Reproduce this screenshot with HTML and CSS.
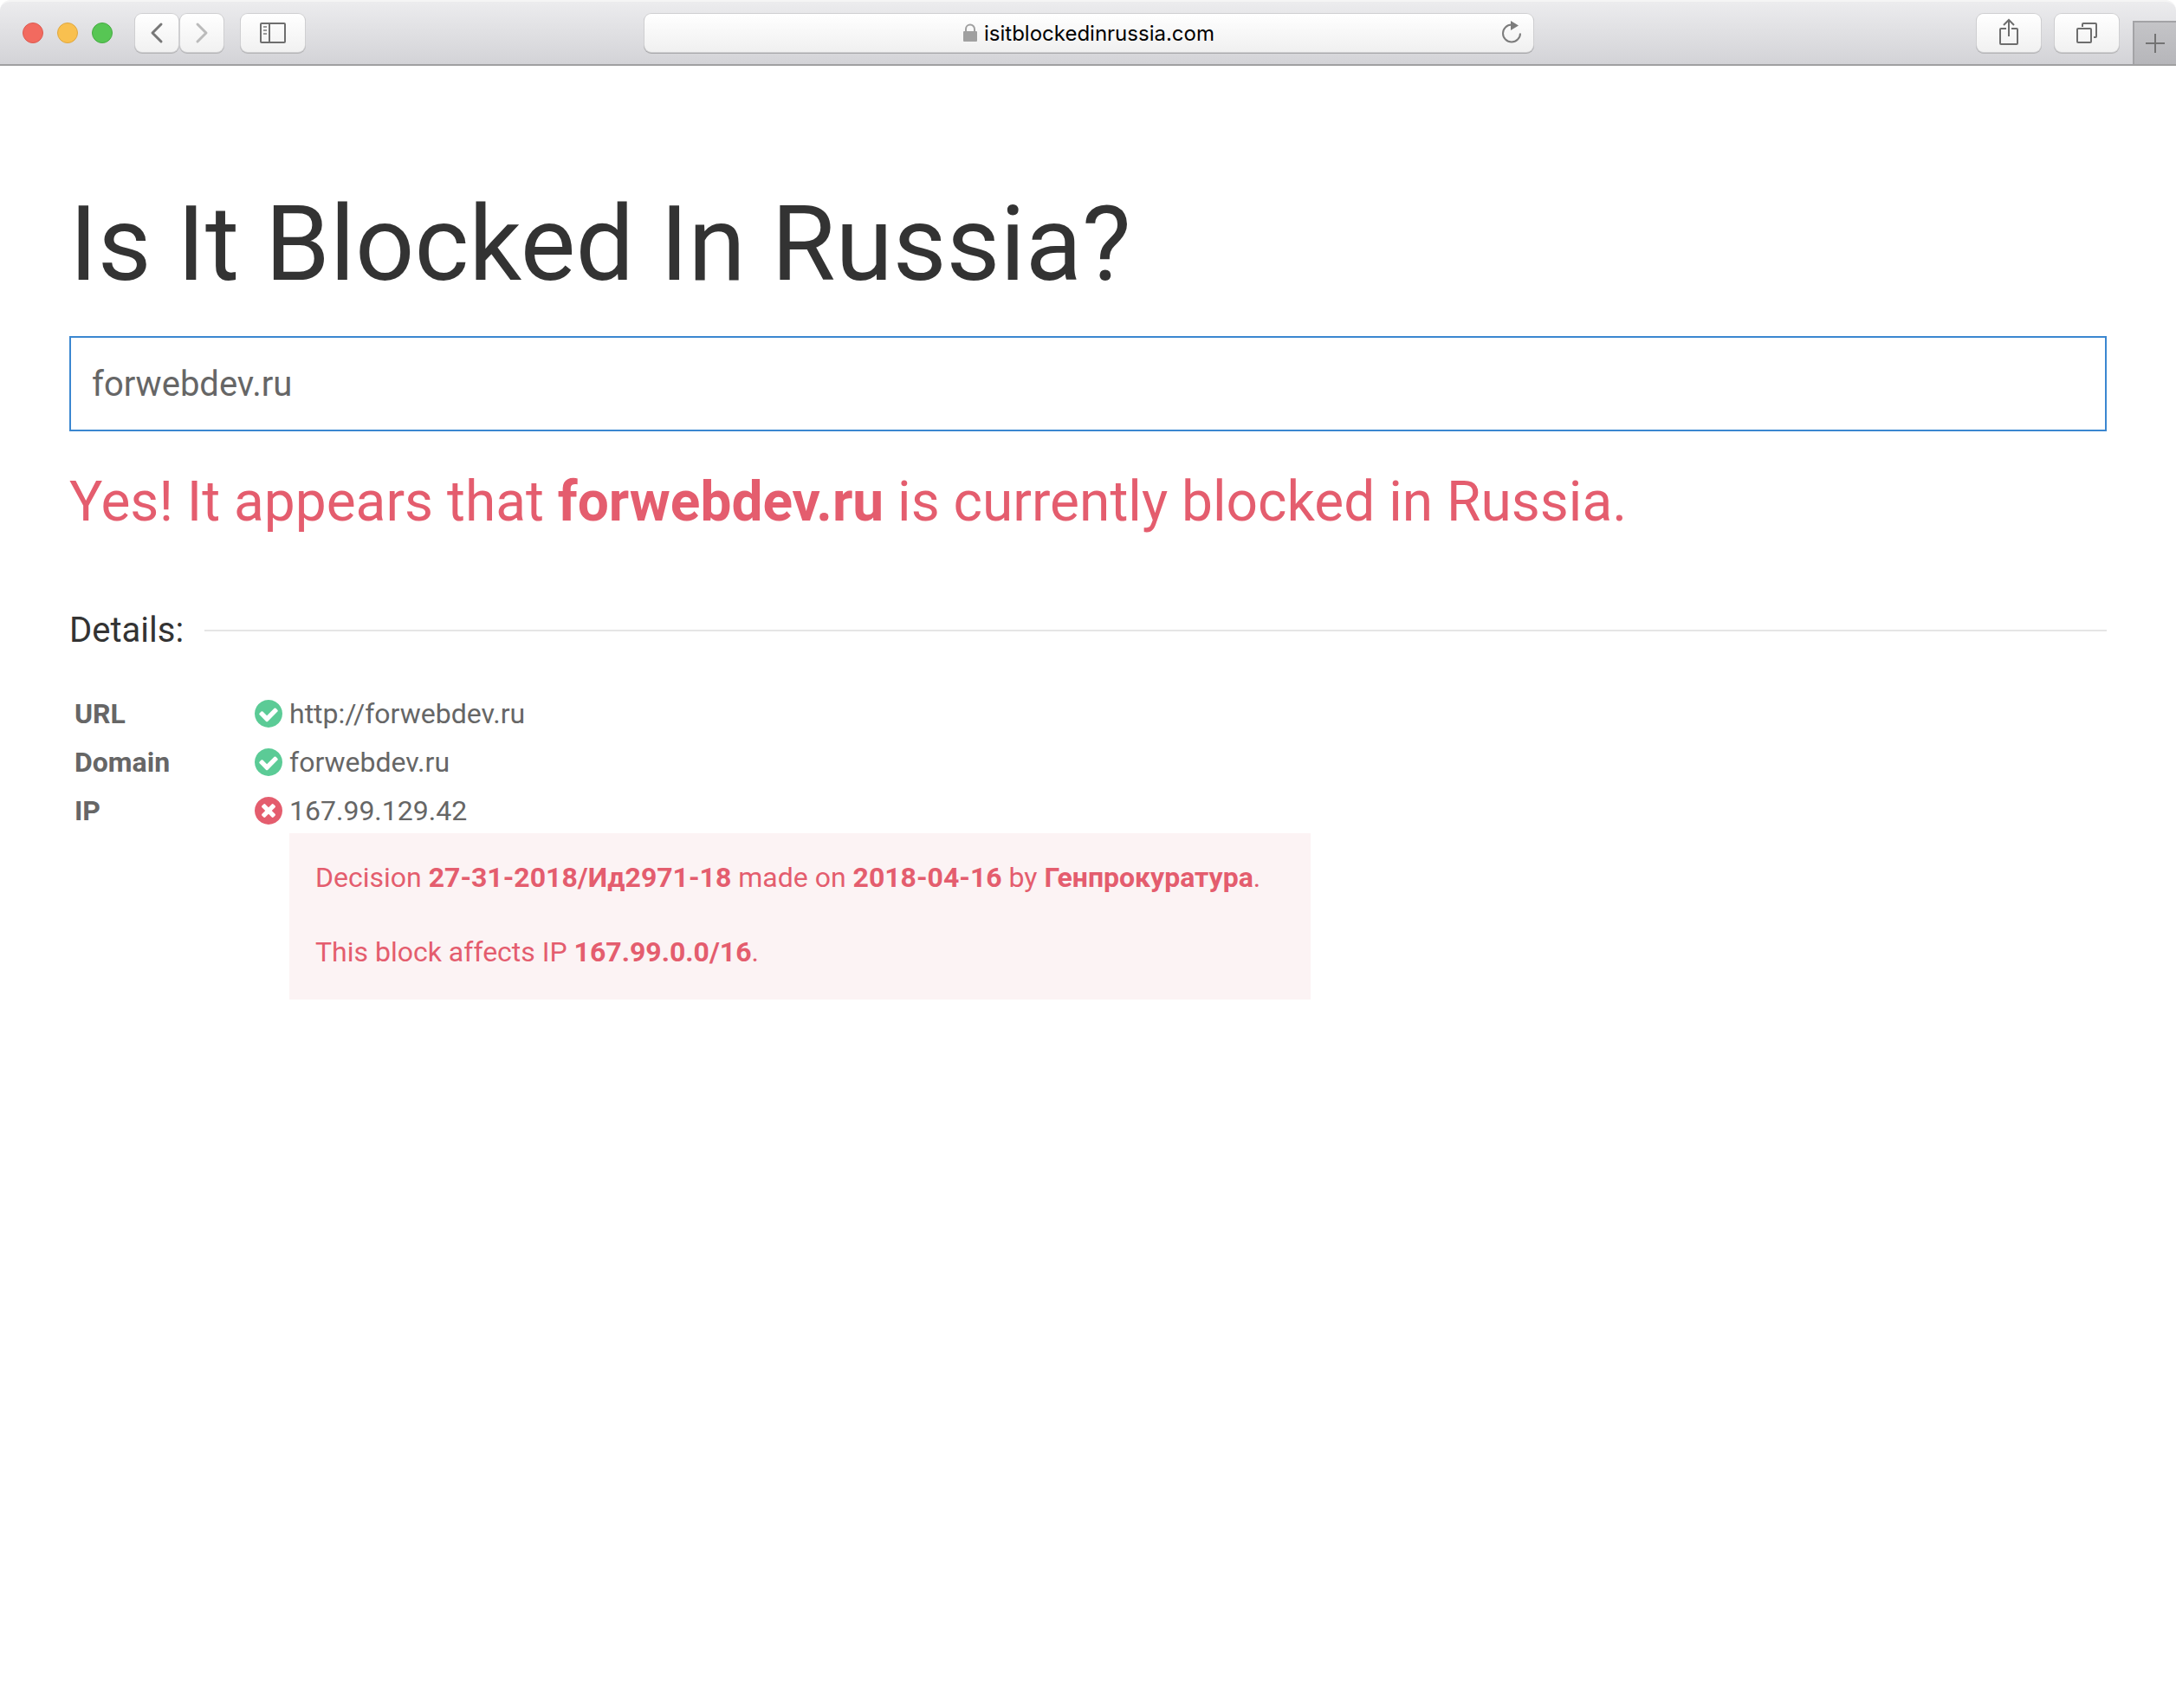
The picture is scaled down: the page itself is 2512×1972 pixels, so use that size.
FILE: index.html
```html
<!DOCTYPE html>
<html lang="en">
<head>
  <meta charset="UTF-8" />
  <meta name="viewport" content="width=device-width, initial-scale=1" />
  <title>Is It Blocked In Russia?</title>
  <link rel="stylesheet" href="styles.css">
</head>
<body>
  <header class="toolbar">
    <div class="toolbar-left">
      <div class="lights">
        <span class="light light-red"></span>
        <span class="light light-yellow"></span>
        <span class="light light-green"></span>
      </div>
      <div class="nav-buttons">
        <button type="button" class="tool-btn tool-btn-small" aria-label="Back">
          <svg width="50" height="44" viewBox="0 0 50 44"><path d="M30 12L20 22L30 32" fill="none" stroke="#777" stroke-width="3" stroke-linecap="round" stroke-linejoin="round"/></svg>
        </button>
        <button type="button" class="tool-btn tool-btn-small" aria-label="Forward">
          <svg width="50" height="44" viewBox="0 0 50 44"><path d="M20 12L30 22L20 32" fill="none" stroke="#bbb" stroke-width="3" stroke-linecap="round" stroke-linejoin="round"/></svg>
        </button>
      </div>
      <button type="button" class="tool-btn" aria-label="Sidebar">
        <svg width="74" height="44" viewBox="0 0 74 44" fill="none" stroke="#6e6e6e" stroke-width="2"><rect x="23" y="11" width="28" height="22" rx="1"/><path d="M33 11V33"/><path d="M26 15H30M26 19H30M26 23H30" stroke="#999"/></svg>
      </button>
    </div>

    <div class="address">
      <div class="address-text">
        <svg width="16" height="22" viewBox="0 0 16 22"><path d="M3 10V6.500a5 5 0 0 1 10 0V10" fill="none" stroke="#a0a0a0" stroke-width="2"/><rect x="0" y="9" width="16" height="12" rx="1" fill="#a0a0a0"/></svg>
        <span>isitblockedinrussia.com</span>
      </div>
      <button type="button" class="reload" aria-label="Reload">
        <svg width="26" height="30" viewBox="0 0 26 30"><path d="M23 15.500A10 10 0 1 1 13 5.500" fill="none" stroke="#7c7c7c" stroke-width="2"/><path d="M12 1L21 6.500L12 12Z" fill="#7c7c7c"/></svg>
      </button>
    </div>

    <div class="toolbar-right">
      <button type="button" class="tool-btn" aria-label="Share">
        <svg width="74" height="44" viewBox="0 0 74 44" fill="none" stroke="#6e6e6e" stroke-width="2"><path d="M34 17H28Q27 17 27 18V34Q27 35 28 35H46Q47 35 47 34V18Q47 17 46 17H40"/><path d="M37 26V8M31 13L37 7L43 13"/></svg>
      </button>
      <button type="button" class="tool-btn" aria-label="Show tabs">
        <svg width="74" height="44" viewBox="0 0 74 44" fill="none" stroke="#6e6e6e" stroke-width="2"><rect x="26" y="17" width="16" height="16" rx="1"/><path d="M32 15V12Q32 11 33 11H47Q48 11 48 12V26Q48 27 47 27H45"/></svg>
      </button>
      <button type="button" class="new-tab" aria-label="New tab">
        <svg width="22" height="22" viewBox="0 0 22 22"><path d="M0 11H22M11 0V22" stroke="#737373" stroke-width="2"/></svg>
      </button>
    </div>
  </header>

  <main class="container">
    <h1>Is It Blocked In Russia?</h1>
    <form>
      <input type="text" class="search" name="q" value="forwebdev.ru" aria-label="Domain, URL or IP" />
    </form>
    <h2 class="verdict">Yes! It appears that <b>forwebdev.ru</b> is currently blocked in Russia.</h2>

    <h3 class="details-title"><span>Details:</span></h3>
    <table class="details">
      <tr>
        <th scope="row">URL</th>
        <td class="status">
          <svg class="ok" viewBox="0 0 1536 1536"><path d="M1284 606q0-28-18-46l-91-90q-19-19-45-19t-45 19l-408 407-226-226q-19-19-45-19t-45 19l-91 90q-18 18-18 46 0 27 18 45l362 362q19 19 45 19 27 0 46-19l543-543q18-18 18-45zm252 162q0 209-103 385.500t-279.500 279.500-385.500 103-385.500-103-279.500-279.500-103-385.500 103-385.500 279.500-279.500 385.500-103 385.500 103 279.500 279.500 103 385.500z"/></svg>
        </td>
        <td>http://forwebdev.ru</td>
      </tr>
      <tr>
        <th scope="row">Domain</th>
        <td class="status">
          <svg class="ok" viewBox="0 0 1536 1536"><path d="M1284 606q0-28-18-46l-91-90q-19-19-45-19t-45 19l-408 407-226-226q-19-19-45-19t-45 19l-91 90q-18 18-18 46 0 27 18 45l362 362q19 19 45 19 27 0 46-19l543-543q18-18 18-45zm252 162q0 209-103 385.500t-279.500 279.500-385.500 103-385.500-103-279.500-279.500-103-385.500 103-385.500 279.500-279.500 385.500-103 385.500 103 279.500 279.500 103 385.500z"/></svg>
        </td>
        <td>forwebdev.ru</td>
      </tr>
      <tr>
        <th scope="row">IP</th>
        <td class="status">
          <svg class="bad" viewBox="0 0 1536 1536"><path d="M1149 994q0-26-19-45l-181-181 181-181q19-19 19-45 0-27-19-46l-90-90q-19-19-46-19-26 0-45 19l-181 181-181-181q-19-19-45-19-27 0-46 19l-90 90q-19 19-19 46 0 26 19 45l181 181-181 181q-19 19-19 45 0 27 19 46l90 90q19 19 46 19 26 0 45-19l181-181 181 181q19 19 45 19 27 0 46-19l90-90q19-19 19-46zm387-226q0 209-103 385.500t-279.500 279.500-385.500 103-385.500-103-279.500-279.500-103-385.500 103-385.500 279.500-279.500 385.500-103 385.500 103 279.500 279.500 103 385.500z"/></svg>
        </td>
        <td>
          167.99.129.42
          <div class="alert">
            <p>Decision <b>27-31-2018/Ид2971-18</b> made on <b>2018-04-16</b> by <b>Генпрокуратура</b>.</p>
            <p>This block affects IP <b>167.99.0.0/16</b>.</p>
          </div>
        </td>
      </tr>
    </table>
  </main>
</body>
</html>
```
FILE: styles.css
```css
* {
  box-sizing: border-box;
}
body {
  margin: 0;
  background: #fff;
  color: #666;
  font-family: Roboto, "Liberation Sans", sans-serif;
  font-size: 32px;
  line-height: 46px;
}
svg {
  display: block;
}
button {
  padding: 0;
  border: none;
  background: none;
}

/* browser toolbar */
.toolbar {
  display: grid;
  grid-template-columns: 1fr minmax(0, 1026px) 1fr;
  align-items: center;
  height: 76px;
  padding-left: 2px;
  background: linear-gradient(#ececee, #d3d3d7);
  border-top: 2px solid #f5f5f5;
  border-bottom: 2px solid #a0a0a1;
  border-radius: 12px 12px 0 0;
}
.toolbar-left,
.toolbar-right,
.lights,
.nav-buttons {
  display: flex;
  align-items: center;
}
.lights {
  gap: 16px;
  margin: 0 26px 0 24px;
}
.light {
  width: 24px;
  height: 24px;
  border-radius: 50%;
  border: 1px solid;
}
.light-red {
  background: #f26a5f;
  border-color: #dc5a50;
}
.light-yellow {
  background: #f9c04f;
  border-color: #dfa73f;
}
.light-green {
  background: #57c654;
  border-color: #46ac42;
}
.nav-buttons {
  gap: 2px;
  margin-right: 20px;
}
.tool-btn {
  width: 74px;
  height: 44px;
  border-radius: 8px;
  background: linear-gradient(#fff, #f1f1f1);
  box-shadow: 0 0 0 1px #cfcfd1, 0 1px 0 1px #b4b4b6;
}
.tool-btn-small {
  width: 50px;
}
.address {
  display: flex;
  align-items: center;
  height: 44px;
  padding: 0 12px 0 38px;
  border-radius: 8px;
  background: linear-gradient(#fff, #f0f0f0);
  box-shadow: 0 0 0 1px #cfcfd1, 0 1px 0 1px #a8a8aa;
}
.address-text {
  flex: 1;
  display: flex;
  justify-content: center;
  align-items: center;
  gap: 8px;
  color: #000;
  font-family: Inter, "Liberation Sans", sans-serif;
  font-size: 24px;
  line-height: 42px;
}
.address-text span {
  padding-top: 2px;
}
.toolbar-right {
  justify-content: flex-end;
  gap: 16px;
  height: 100%;
}
.new-tab {
  display: flex;
  justify-content: center;
  align-items: center;
  align-self: flex-end;
  width: 50px;
  height: 50px;
  background: linear-gradient(#c4c4c7, #b6b6ba);
  border-top: 2px solid #a3a3a6;
  border-left: 2px solid #a3a3a6;
}

/* page */
.container {
  padding: 0 80px;
}
h1 {
  margin: 0;
  padding-top: 138px;
  color: #333;
  font-size: 120px;
  font-weight: 400;
  line-height: 136px;
}
.search {
  display: block;
  width: 100%;
  height: 110px;
  margin-top: 38px;
  padding: 0 24px;
  border: 2px solid #3b87d0;
  border-radius: 0;
  outline: none;
  background: #fff;
  color: #666;
  font-family: inherit;
  font-size: 40px;
}
.verdict {
  margin: 42px 0 0;
  color: #e45d6e;
  font-size: 64px;
  font-weight: 400;
  line-height: 80px;
}
.details-title {
  display: flex;
  align-items: center;
  gap: 24px;
  margin: 78px 0 0;
  color: #333;
  font-size: 40px;
  font-weight: 400;
  line-height: 60px;
}
.details-title::after {
  content: "";
  flex: 1;
  border-bottom: 2px solid #e5e5e5;
}
.details {
  width: 100%;
  margin-top: 38px;
  border-collapse: collapse;
}
.details th,
.details td {
  padding: 5px 0;
  text-align: left;
  vertical-align: top;
}
.details th {
  width: 214px;
  padding-left: 6px;
}
.details .status {
  width: 40px;
  padding-top: 12px;
}
.status svg {
  width: 32px;
  height: 32px;
}
.ok {
  fill: #5bcb96;
}
.bad {
  fill: #e45d6e;
}
.alert {
  width: fit-content;
  margin-top: 3px;
  padding: 28px 58px 32px 30px;
  background: #fcf3f4;
  color: #e45d6e;
}
.alert p {
  margin: 0;
}
.alert p + p {
  margin-top: 40px;
}
```
